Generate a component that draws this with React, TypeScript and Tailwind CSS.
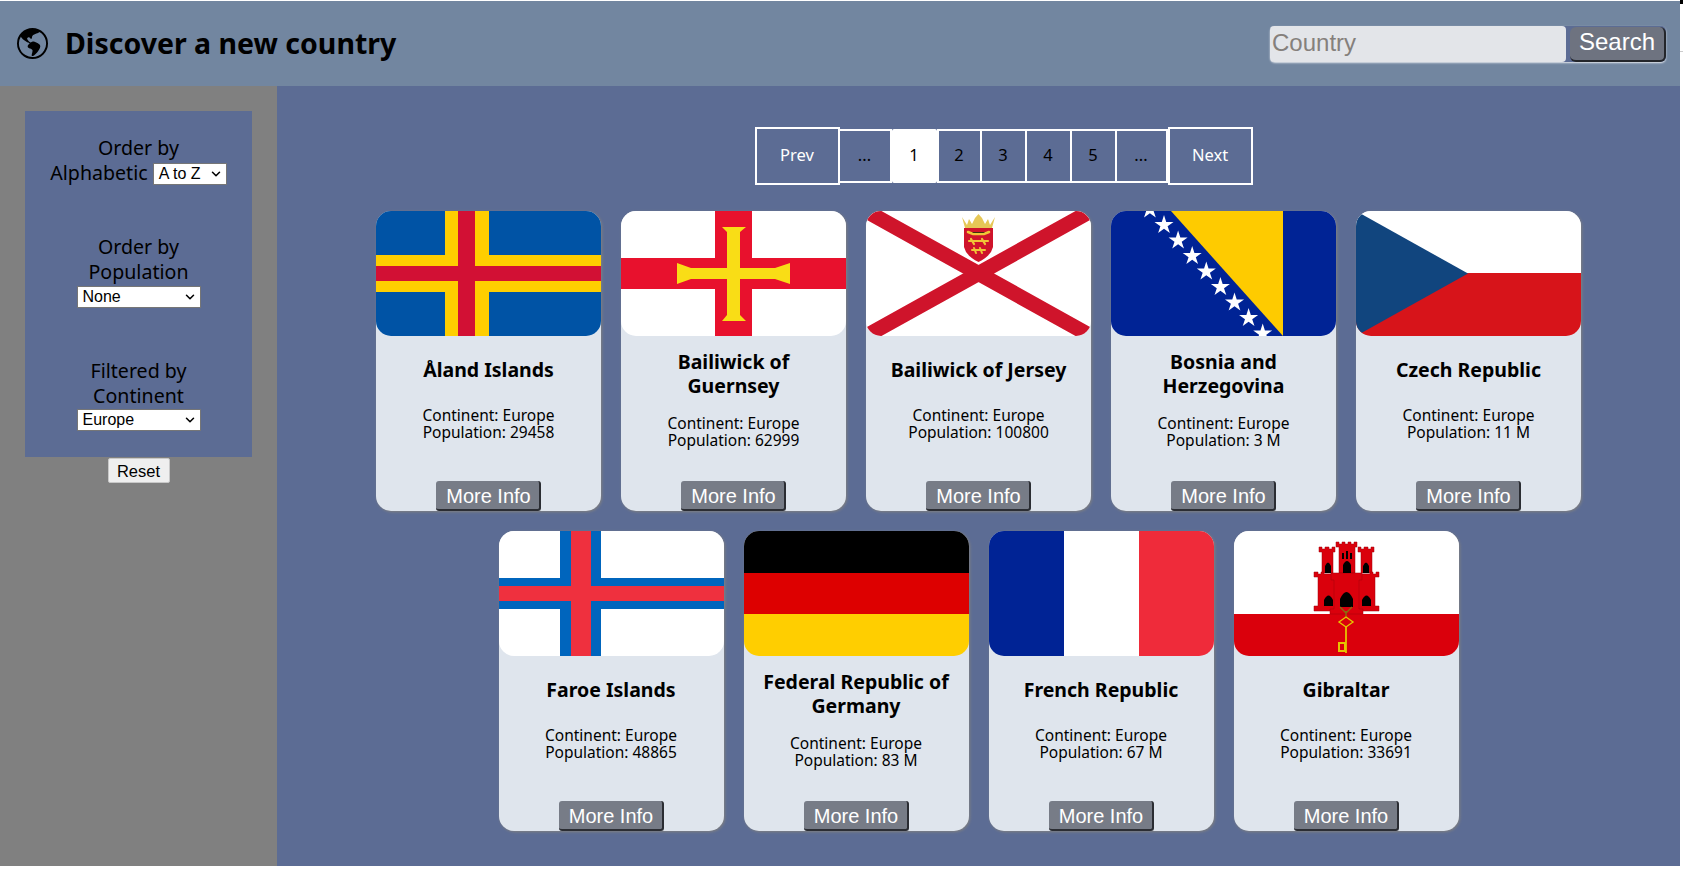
import React from 'react';
import { ChevronDown } from 'lucide-react';
import { BsGlobeAmericas } from 'react-icons/bs';

const Aland = () => (
  <svg viewBox="0 0 225 125" className="block w-full h-full" preserveAspectRatio="none">
    <rect width="225" height="125" fill="#0053a5" />
    <rect x="69" width="44" height="125" fill="#ffce00" />
    <rect y="44" width="225" height="37" fill="#ffce00" />
    <rect x="82" width="17" height="125" fill="#d21034" />
    <rect y="55" width="225" height="15" fill="#d21034" />
  </svg>
);

const Guernsey = () => (
  <svg viewBox="0 0 225 125" className="block w-full h-full" preserveAspectRatio="none">
    <rect width="225" height="125" fill="#fff" />
    <rect x="94" width="37" height="125" fill="#e8112d" />
    <rect y="47" width="225" height="31" fill="#e8112d" />
    <path
      d="M101 16 H125 L119 21 V57 H154 L169 52 V73 L154 68 H119 V104 L125 110 H101 L106 104 V68 H70 L56 73 V52 L70 57 H106 V21 Z"
      fill="#f9dd16"
    />
  </svg>
);

const Jersey = () => (
  <svg viewBox="0 0 225 125" className="block w-full h-full" preserveAspectRatio="none">
    <rect width="225" height="125" fill="#fff" />
    <path d="M0 0 L225 125 M225 0 L0 125" stroke="#cf142b" strokeWidth="15" />
    {/* crest */}
    <path d="M98 17 H127 V36 Q125 45 112.5 51 Q100 45 98 36 Z" fill="#cf142b" />
    <path
      d="M96 6 L101 14 L103 8 L106 13 L109 7 L112.5 3 L116 7 L119 13 L122 8 L124 14 L129 6 L126 17 H99 Z"
      fill="#e6c756"
    />
    <g stroke="#f0c637" strokeWidth="2.6" strokeLinecap="round">
      <path d="M102 21 L107 23 H118 L123 21" />
      <path d="M103 30 H122 M105 28 L108 33 M116 28 L119 33" strokeWidth="2.2" />
      <path d="M106 39 H119 M108 37 L110 42 M114 37 L116 42" strokeWidth="2" />
    </g>
  </svg>
);

const Bosnia = () => {
  const stars = [-1, 0, 1, 2, 3, 4, 5, 6, 7];
  return (
    <svg viewBox="0 0 225 125" className="block w-full h-full" preserveAspectRatio="none">
      <rect width="225" height="125" fill="#002395" />
      <path d="M60 0 H172 V125 Z" fill="#fecb00" />
      {stars.map((i) => {
        const cx = 53 + i * 14.1;
        const cy = 14 + i * 15.5;
        const pts = [0, 1, 2, 3, 4, 5, 6, 7, 8, 9]
          .map((k) => {
            const r = k % 2 === 0 ? 10 : 3.8;
            const a = (Math.PI / 5) * k - Math.PI / 2;
            return `${cx + r * Math.cos(a)},${cy + r * Math.sin(a)}`;
          })
          .join(' ');
        return <polygon key={i} points={pts} fill="#fff" />;
      })}
    </svg>
  );
};

const Czech = () => (
  <svg viewBox="0 0 225 125" className="block w-full h-full" preserveAspectRatio="none">
    <rect width="225" height="62" fill="#fff" />
    <rect y="62" width="225" height="63" fill="#d7141a" />
    <path d="M0 0 L112 62.5 L0 125 Z" fill="#11457e" />
  </svg>
);

const Faroe = () => (
  <svg viewBox="0 0 225 125" className="block w-full h-full" preserveAspectRatio="none">
    <rect width="225" height="125" fill="#fff" />
    <rect x="61" width="41" height="125" fill="#0065bd" />
    <rect y="47" width="225" height="31" fill="#0065bd" />
    <rect x="72" width="20" height="125" fill="#ef303e" />
    <rect y="55" width="225" height="15" fill="#ef303e" />
  </svg>
);

const Germany = () => (
  <svg viewBox="0 0 225 125" className="block w-full h-full" preserveAspectRatio="none">
    <rect width="225" height="42" fill="#000" />
    <rect y="42" width="225" height="41" fill="#dd0000" />
    <rect y="83" width="225" height="42" fill="#ffce00" />
  </svg>
);

const France = () => (
  <svg viewBox="0 0 225 125" className="block w-full h-full" preserveAspectRatio="none">
    <rect width="75" height="125" fill="#002395" />
    <rect x="75" width="75" height="125" fill="#fff" />
    <rect x="150" width="75" height="125" fill="#ef2b3a" />
  </svg>
);

const Gibraltar = () => (
  <svg viewBox="0 0 225 125" className="block w-full h-full" preserveAspectRatio="none">
    <rect width="225" height="83" fill="#fff" />
    <rect y="83" width="225" height="42" fill="#da000c" />
    {/* castle */}
    <g fill="#da000c" stroke="#a0000a" strokeWidth="0.5">
      <path d="M85 21 V16 H88 V18 H91 V16 H95 V18 H98 V16 H101 V21 H99 V42 H88 V21 Z" />
      <path d="M124 21 V16 H127 V18 H130 V16 H134 V18 H137 V16 H140 V21 H138 V42 H127 V21 Z" />
      <path d="M102 16 V11 H105 V13 H108 V11 H111 V13 H114 V11 H117 V13 H120 V11 H123 V16 H121 V42 H105 V16 Z" />
      <path d="M80 41 H84 V43 H87 V41 H90 V43 H136 V41 H139 V43 H142 V41 H145 V46 H141 V75 H145 V80 H80 V75 H84 V46 H80 Z" />
      <path d="M97 42 H128 V49 H125 V78 H129 V83 H96 V78 H100 V49 H97 Z" />
    </g>
    <g fill="#000">
      <path d="M91 42 V35 Q94 28 97 35 V42 Z" />
      <path d="M109 42 V34 Q113 26 117 34 V42 Z" />
      <path d="M129 42 V35 Q132 28 135 35 V42 Z" />
      <path d="M90 75 V69 Q94.5 60 99 69 V75 Z" />
      <path d="M106 76 V68 Q112.5 54 119 68 V76 Z" />
      <path d="M128 75 V69 Q132.5 60 137 69 V75 Z" />
      <rect x="108" y="22" width="2" height="6" />
      <rect x="112" y="20" width="2" height="8" />
      <rect x="116" y="22" width="2" height="6" />
    </g>
    {/* key */}
    <g fill="none" stroke="#e6c300" strokeWidth="1.4">
      <path d="M106 76 L112 82 L118 76 M112 80 V86" stroke="#8a6d10" />
      <path d="M112 86 L119 91 L112 96 L105 91 Z" />
      <path d="M112 96 V122" strokeWidth="1.8" />
      <rect x="105" y="112" width="6" height="8" strokeWidth="2" />
    </g>
  </svg>
);

const countries = [
  { name: 'Åland Islands', pop: '29458', Flag: Aland },
  { name: 'Bailiwick of Guernsey', pop: '62999', Flag: Guernsey },
  { name: 'Bailiwick of Jersey', pop: '100800', Flag: Jersey },
  { name: 'Bosnia and Herzegovina', pop: '3 M', Flag: Bosnia },
  { name: 'Czech Republic', pop: '11 M', Flag: Czech },
  { name: 'Faroe Islands', pop: '48865', Flag: Faroe },
  { name: 'Federal Republic of Germany', pop: '83 M', Flag: Germany },
  { name: 'French Republic', pop: '67 M', Flag: France },
  { name: 'Gibraltar', pop: '33691', Flag: Gibraltar },
];

const SelectBox = ({ label, widthClass }: { label: string; widthClass: string }) => (
  <span
    className={`relative inline-flex items-center h-[22px] bg-white border border-[#767676] pl-[5px] text-[16px] text-black font-['Liberation_Sans',sans-serif] align-middle ${widthClass}`}
  >
    {label}
    <ChevronDown className="absolute right-[3px] top-[3px] w-[14px] h-[14px]" strokeWidth={2.6} />
  </span>
);

const CountryCard = ({ name, pop, Flag }: (typeof countries)[number]) => (
  <div className="w-[225px] h-[300px] rounded-[15px] bg-[#dfe5ed] shadow-[1px_1px_3px_#808080] flex flex-col items-center">
    <div className="w-full h-[125px] rounded-[15px] overflow-hidden shrink-0">
      <Flag />
    </div>
    {/* space-evenly reproduces the different gaps of one and two line titles */}
    <div className="flex-1 flex flex-col items-center justify-evenly w-full px-[15px] pb-[17px]">
      <h2 className="text-[19.5px] leading-[24px] font-bold text-center text-black">{name}</h2>
      <p className="mt-[2px] text-[15.5px] leading-[17.5px] text-center text-black">
        Continent: Europe
        <br />
        Population: {pop}
      </p>
    </div>
    <button className="h-[30px] w-[105px] shrink-0 rounded-[3px] bg-[#777c87] border-b-2 border-r-2 border-[#2b2d33] pl-[2px] pb-[2px] text-white text-[20px] font-['Liberation_Sans',sans-serif]">
      More Info
    </button>
  </div>
);

const PageCell = ({ label, className }: { label: string; className: string }) => (
  <div className={`flex items-center justify-center text-[16.5px] pb-[2px] ${className}`}>{label}</div>
);

export default function App() {
  return (
    <div className="w-[1683px] h-[872px] bg-white font-['Noto_Sans',sans-serif] overflow-hidden flex">
      <div className="w-[1680px] pt-px">
        <header className="h-[85px] bg-[#7286a0] flex items-center justify-between pl-[17px] pr-[14px]">
          <div className="flex items-center gap-[17px]">
            <BsGlobeAmericas className="w-[31px] h-[31px] text-black shrink-0" />
            <h1 className="text-[28.5px] font-bold text-black leading-none">Discover a new country</h1>
          </div>
          <div className="flex items-center h-[36px] mt-px rounded-[5px] bg-[#5c6c94] shadow-[0_1px_2px_rgba(255,255,255,0.8)]">
            <input
              placeholder="Country"
              className="w-[296px] h-[36px] rounded-[4px] bg-[#e3e5e9] pl-[2px] pb-[3px] text-[24px] text-black placeholder:text-[#85807c] font-['Liberation_Sans',sans-serif] outline-none"
            />
            <button className="ml-[4px] w-[96px] h-[35px] rounded-[6px] bg-[#6e7380] border-b-2 border-r-2 border-[#23252a] pb-[2px] text-white text-[24px] leading-none font-['Liberation_Sans',sans-serif]">
              Search
            </button>
          </div>
        </header>
        <div className="flex h-[780px]">
          <aside className="w-[277px] shrink-0 bg-[#808080] pl-[25px] pt-[25px]">
            <div className="w-[227px] h-[346px] bg-[#5c6c94] pt-[25px] flex flex-col items-center text-[19.6px] leading-[24.5px] text-black text-center">
              <div className="w-[190px]">
                Order by
                <br />
                Alphabetic <SelectBox label="A to Z" widthClass="w-[74px]" />
              </div>
              <div className="w-[190px] mt-[50px]">
                Order by
                <br />
                Population
                <div className="flex justify-center mt-[2px]">
                  <SelectBox label="None" widthClass="w-[124px]" />
                </div>
              </div>
              <div className="w-[190px] mt-[51px]">
                Filtered by
                <br />
                Continent
                <div className="flex justify-center mt-px">
                  <SelectBox label="Europe" widthClass="w-[124px]" />
                </div>
              </div>
            </div>
            <div className="w-[227px] flex justify-center">
              <button className="w-[62px] h-[25px] mt-px rounded-[2px] bg-[#efefef] border border-[#c8c8c8] text-[16.5px] text-black font-['Liberation_Sans',sans-serif]">
                Reset
              </button>
            </div>
          </aside>
          <main className="flex-1 bg-[#5c6c94] pt-[41px] flex flex-col items-center">
            <div className="flex items-center h-[58px] ml-[50px] text-black">
              <PageCell label="Prev" className="w-[85px] h-[58px] border-2 border-white text-white" />
              <PageCell label="..." className="w-[52px] h-[54px] border-2 border-l-0 border-white" />
              <PageCell label="1" className="w-[45px] h-[54px] bg-white rounded-[2px]" />
              <PageCell label="2" className="w-[45px] h-[54px] border-2 border-white" />
              <PageCell label="3" className="w-[45px] h-[54px] border-2 border-l-0 border-white" />
              <PageCell label="4" className="w-[45px] h-[54px] border-2 border-l-0 border-white" />
              <PageCell label="5" className="w-[45px] h-[54px] border-2 border-l-0 border-white" />
              <PageCell label="..." className="w-[51px] h-[54px] border-2 border-l-0 border-white" />
              <PageCell label="Next" className="w-[85px] h-[58px] border-2 border-white text-white" />
            </div>
            <div className="mt-[26px] flex flex-wrap justify-center gap-[20px] w-[1245px]">
              {countries.map((c) => (
                <CountryCard key={c.name} {...c} />
              ))}
            </div>
          </main>
        </div>
      </div>
      <div className="w-[3px] flex flex-col">
        <div className="h-[4px] bg-black" />
        <div className="h-px mt-[47px] bg-[#cccccc]" />
      </div>
    </div>
  );
}
